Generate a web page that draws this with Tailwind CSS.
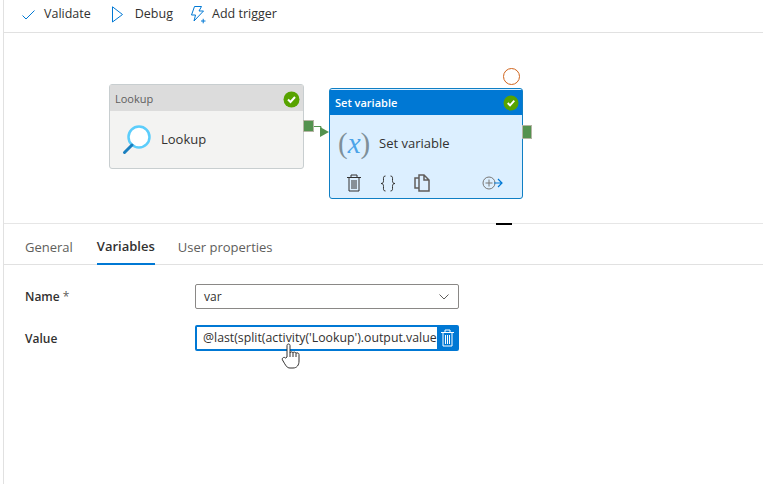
<!DOCTYPE html>
<html lang="en">
<head>
    <meta charset="UTF-8">
    <title>Set variable</title>
    <script src="https://cdn.jsdelivr.net/npm/@tailwindcss/browser@4"></script>
</head>
<body class="bg-white font-['Open_Sans','Noto_Sans',sans-serif] text-[12px] text-[#323130] overflow-hidden">
    <div class="w-[763px] h-[484px] pl-[3px] overflow-hidden">
        <div class="h-full border-l border-[#e1e1e1] flex flex-col relative">
            <!-- toolbar -->
            <div class="h-[33px] shrink-0 border-b border-[#e1e1e1] flex items-center pl-[16px] pb-[3px] text-[12.5px]">
                <svg class="w-[16px] h-[12px] mr-[8px]" viewBox="0 0 16 12" fill="none" stroke="#0078d4" stroke-width="1"><path d="M2.5 6.5 L6 10 L14.5 1.5"/></svg>
                <span class="mr-[20px]">Validate</span>
                <svg class="w-[12px] h-[17px] mr-[12px]" viewBox="0 0 12 17" fill="none" stroke="#0078d4" stroke-width="1"><path d="M1.5 0.8 L11.5 8.5 L1.5 16 Z"/></svg>
                <span class="mr-[17px]">Debug</span>
                <svg class="w-[16px] h-[18px] mr-[6px]" viewBox="0 0 16 18" fill="none" stroke="#0078d4" stroke-width="1"><path d="M4.5 0.5 H11.5 L9 5 H13.5 L4 15 L5.5 9 H1.5 Z"/><path d="M11 15 H15.5 M13.2 12.8 V17.3"/></svg>
                <span>Add trigger</span>
            </div>
            <!-- canvas -->
            <div class="h-[191px] shrink-0 relative border-b border-[#e6e6e6]">
                <div class="absolute left-[105px] top-[51px] w-[195px] h-[85px] rounded-[3px] border border-[#c8ced0] bg-[#f3f3f2] flex flex-col">
                    <div class="h-[26px] bg-[#dcdcdc] flex items-center justify-between pl-[5px] pr-[3px] pt-[2px] text-[11px] text-[#605e5c]">
                        <span>Lookup</span>
                        <svg class="w-[17px] h-[17px]" viewBox="0 0 17 17"><circle cx="8.5" cy="8.5" r="8" fill="#57a300"/><path d="M5 8.5 L7.5 11 L12 6" fill="none" stroke="#fff" stroke-width="2"/></svg>
                    </div>
                    <div class="flex-1 flex items-center pl-[11px]">
                        <svg class="w-[30px] h-[32px] mr-[10px]" viewBox="0 0 30 32" fill="none"><circle cx="18" cy="13" r="10.5" stroke="#5ccdfb" stroke-width="2.5" fill="#fff"/><path d="M11 21 L3.5 28.5" stroke="#1a7fbf" stroke-width="3" stroke-linecap="round"/></svg>
                        <span class="text-[13px]">Lookup</span>
                    </div>
                </div>
                <div class="absolute left-[299px] top-[87px] w-[11px] h-[12px] bg-[#54924f] border border-[#b5b5a5]"></div>
                <svg class="absolute left-[310px] top-[91px] w-[15px] h-[16px]" viewBox="0 0 15 16" fill="none"><path d="M0 2.5 H7 V8" stroke="#54924f"/><path d="M6 3 L15 8 L6 13 Z" fill="#54924f"/></svg>
                <div class="absolute left-[499px] top-[35px] w-[17px] h-[17px] rounded-full border border-[#d0641c]"></div>
                <div class="absolute left-[325px] top-[55px] w-[194px] h-[111px] rounded-[3px] border border-[#0f7fc4] bg-[#dcefff] flex flex-col">
                    <div class="h-[25px] mt-[1px] bg-[#0078d4] flex items-center justify-between pl-[5px] pr-[3px] pt-[1px] text-[11px] font-semibold text-white">
                        <span>Set variable</span>
                        <svg class="w-[16px] h-[16px]" viewBox="0 0 17 17"><circle cx="8.5" cy="8.5" r="8" fill="#57a300"/><path d="M5 8.5 L7.5 11 L12 6" fill="none" stroke="#fff" stroke-width="2"/></svg>
                    </div>
                    <div class="flex items-center pl-[8px] h-[56px]">
                        <span class="w-[33px] mr-[8px] font-['Liberation_Serif',serif] text-[29px] leading-none text-[#7f8f99] whitespace-nowrap">(<span class="italic text-[#4ba3e8]">x</span>)</span>
                        <span class="text-[13px] pt-[1px]">Set variable</span>
                    </div>
                    <div class="flex items-center h-[24px] pl-[17px]">
                        <svg class="w-[14px] h-[18px] mr-[19px]" viewBox="0 0 14 18" fill="none" stroke="#323130"><path d="M0 3.5 H14 M4 3 V1 H10 V3 M2 4 V17 H12 V4 M5 6 V15 M7 6 V15 M9 6 V15"/></svg>
                        <svg class="w-[16px] h-[17px] mr-[18px]" viewBox="0 0 16 17" fill="none" stroke="#323130"><path d="M5.5 1 C3 1 3.5 3 3.5 5.5 C3.5 7.5 3 8.5 1 8.5 C3 8.5 3.5 9.5 3.5 11.5 C3.5 14 3 16 5.5 16 M10.5 1 C13 1 12.5 3 12.5 5.5 C12.5 7.5 13 8.5 15 8.5 C13 8.5 12.5 9.5 12.5 11.5 C12.5 14 13 16 10.5 16"/></svg>
                        <svg class="w-[16px] h-[18px] mr-[52px]" viewBox="0 0 16 18" fill="none" stroke="#605e5c" stroke-width="1.5"><path d="M5 4 V1 H10 L15 6 V17 H5 Z M5 4 H1 V14 H5 M10 1 V6 H15"/></svg>
                        <svg class="w-[21px] h-[14px]" viewBox="0 0 21 14" fill="none"><circle cx="7" cy="7" r="6" stroke="#797775"/><path d="M3.5 7 H10.5 M7 3.5 V10.5" stroke="#797775"/><path d="M12 7 H20 M16 3 L20 7 L16 11" stroke="#0078d4" stroke-width="1.2"/></svg>
                    </div>
                </div>
                <div class="absolute left-[518px] top-[92px] w-[10px] h-[14px] bg-[#54924f] border border-[#b5b5a5]"></div>
                <div class="absolute left-[492px] top-[190px] w-[16px] h-[2px] bg-black"></div>
            </div>
            <!-- tabs -->
            <div class="h-[41px] shrink-0 border-b border-[#e1e1e1] flex pl-[21px] text-[13px] text-[#605e5c]">
                <span class="h-[41px] flex items-center pt-[6px] mr-[24px]">General</span>
                <span class="h-[41px] flex items-center pt-[6px] mr-[23px] font-semibold text-[#323130] border-b-2 border-[#0078d4] box-border">Variables</span>
                <span class="h-[41px] flex items-center pt-[6px]">User properties</span>
            </div>
            <!-- form -->
            <div class="pl-[21px] pt-[19px] flex flex-col gap-[16px]">
                <div class="flex items-center h-[25px]">
                    <label class="w-[170px] font-semibold">Name <span class="font-normal text-[#605e5c]">*</span></label>
                    <div class="w-[264px] h-[25px] border border-[#8a8886] rounded-[2px] flex items-center justify-between pl-[8px] pr-[9px]">
                        <span>var</span>
                        <svg class="w-[10px] h-[6px]" viewBox="0 0 10 6" fill="none" stroke="#605e5c"><path d="M0.5 0.5 L5 5 L9.5 0.5"/></svg>
                    </div>
                </div>
                <div class="flex items-center h-[26px]">
                    <label class="w-[170px] pt-[1px] font-semibold">Value</label>
                    <div class="w-[264px] h-[26px] border-2 border-[#0078d4] rounded-[2px] flex items-center pl-[6px] relative overflow-hidden text-[12.3px]">
                        <span class="whitespace-nowrap">@last(split(activity('Lookup').output.value</span>
                        <div class="absolute right-0 top-0 w-[20px] h-[22px] bg-[#0078d4] flex items-center justify-center">
                            <svg class="w-[13px] h-[18px]" viewBox="0 0 13 18" fill="none" stroke="#fff"><path d="M0 3.5 H13 M4 3 V1 H9 V3 M2 4 V17 H11 V4 M4.5 6 V15 M6.5 6 V15 M8.5 6 V15"/></svg>
                        </div>
                    </div>
                </div>
            </div>
            <!-- cursor over the value field -->
            <svg class="absolute left-[277px] top-[343px] w-[20px] h-[26px]" viewBox="0 0 20 26" fill="#fff" stroke="#323130"><path d="M6 14 V2.5 C6 0.5 9 0.5 9 2.5 V10 C9 8.5 12 8.5 12 10 C12 8.7 15 8.7 15 10.5 C15 9.5 18 9.5 18 11.5 V18 C18 22 16 25 12 25 H9 C6 25 5 23 1.5 17 C0.5 15 3 13.5 4.5 15 Z"/><path d="M9 10 V14 M12 10 V14 M15 10.5 V14"/></svg>
        </div>
    </div>
</body>
</html>
